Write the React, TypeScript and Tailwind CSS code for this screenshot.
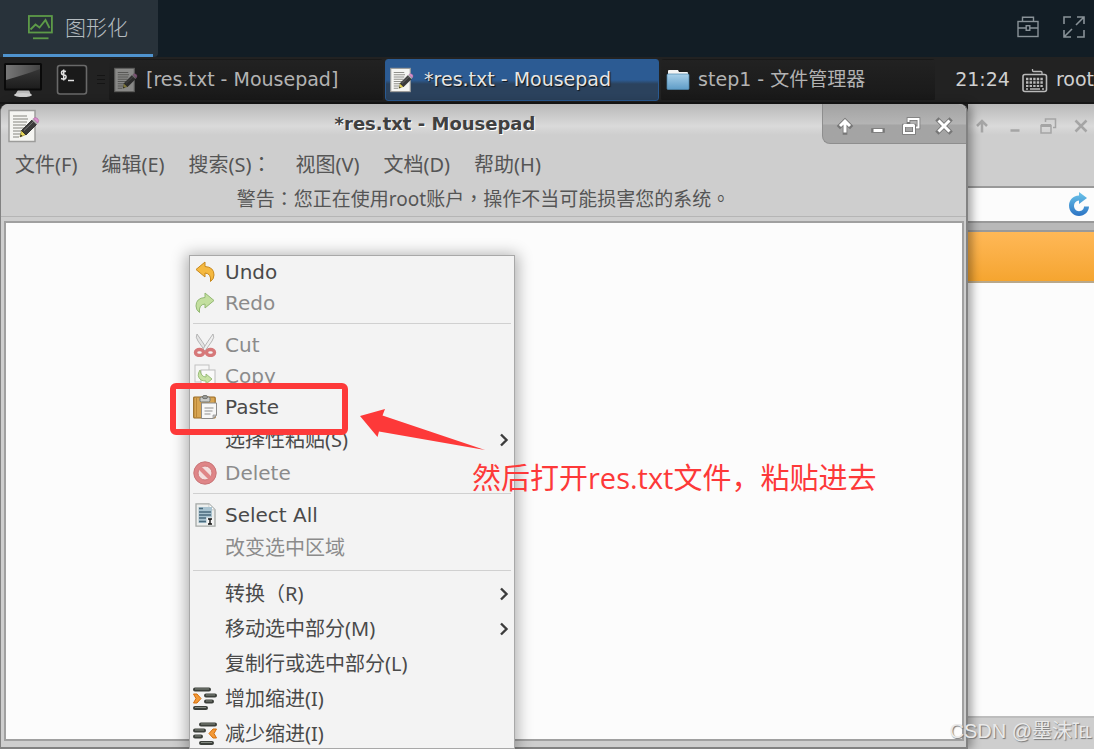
import type { ReactNode } from 'react'

const LATIN = "font-['DejaVu_Sans','Noto_Sans_CJK_SC',sans-serif]"
const CJK = "font-['Noto_Sans','Noto_Sans_CJK_SC',sans-serif]"
// the TC face centres its colon and comma
const CJK_CENTERED = "font-['Noto_Sans','Noto_Sans_CJK_TC',sans-serif]"

function ChartMonitorIcon() {
  return (
    <svg className="w-[25px] h-[25px]" viewBox="0 0 25 25" fill="none" stroke="#5d9a48" strokeWidth="1.8">
      <rect x="0.9" y="1" width="23" height="16.5" />
      <path d="M2.5 14.5 7.5 9.5l4 3L17.5 5l4 8" />
      <path d="M5 23.3h15.5" />
    </svg>
  )
}

function ToolboxIcon() {
  return (
    <svg className="w-[22px] h-[22px]" viewBox="0 0 22 22" fill="none" stroke="currentColor" strokeWidth="1.4">
      <rect x="1" y="5.5" width="20" height="15" />
      <path d="M5.5 5.5V1.2h11v4.3M1 12h8M13 12h8" />
      <rect x="9.2" y="9.7" width="3.6" height="4.6" />
    </svg>
  )
}

function ExpandIcon() {
  return (
    <svg className="w-[22px] h-[22px]" viewBox="0 0 22 22" fill="none" stroke="currentColor" strokeWidth="1.6">
      <path d="M1 8V1h7M14 1h7v7M21 1l-8 8M21 14v7h-7M8 21H1v-7M1 21l8-8" />
    </svg>
  )
}

function DesktopIcon() {
  return (
    <svg className="w-10 h-9" viewBox="0 0 40 36">
      <defs>
        <linearGradient id="screen" x1="0" y1="0" x2="0" y2="1">
          <stop offset="0" stopColor="#3c3c3c" />
          <stop offset="1" stopColor="#1d1d1d" />
        </linearGradient>
        <linearGradient id="glare" x1="0" y1="0" x2="1" y2="0">
          <stop offset="0" stopColor="#777" />
          <stop offset="1" stopColor="#444" />
        </linearGradient>
      </defs>
      <path d="M15 28h11l2 5q-7 2.5-16 0z" fill="#b9b9b9" />
      <ellipse cx="20" cy="33" rx="9" ry="2" fill="#cfcfcf" />
      <rect x="1" y="1" width="38" height="27.5" rx="1.5" fill="#0a0a0a" />
      <rect x="3" y="3" width="34" height="23.5" fill="url(#screen)" />
      <path d="M3 3h34v4Q24 12 3 18z" fill="url(#glare)" />
    </svg>
  )
}

function TerminalIcon() {
  return (
    <svg className="w-8 h-8" viewBox="0 0 32 32">
      <rect x="1.5" y="1.5" width="29" height="28.5" rx="2.5" fill="#1a1a1a" stroke="#696969" strokeWidth="1.6" />
      <g fill="none" stroke="#e2e2e2" strokeWidth="1.5">
        <path d="M10 7.5Q5.5 6 5.5 8.5T8 11t2 2.5T5 14.5M7.7 5.5v11" />
        <path d="M12 16.500h6" />
      </g>
    </svg>
  )
}

function NoteIcon({ className }: { className: string }) {
  return (
    <svg className={className} viewBox="0 0 32 34">
      <rect x="1" y="1.5" width="26" height="31" fill="#f5f5f2" stroke="#9c9c9a" strokeWidth="1.5" />
      <path d="M5 7h14M5 10h15M5 13h14M5 16h13M5 19h11M5 22h10M5 25h8M5 28h6" stroke="#85857f" strokeWidth="1.2" />
      <path d="M12 28l1.5-6.5 4.5 4z" fill="#e8d859" stroke="#8a7d25" strokeWidth=".6" />
      <path d="M12 28l.7-2.5 1.8 1.6z" fill="#222" />
      <path d="M13.5 21.5 24 11l4.5 4.5L18 26z" fill="#3a3a3a" stroke="#222" strokeWidth=".8" />
      <path d="M16 21.5 25.5 12.5" stroke="#777" strokeWidth="1" />
      <path d="M24 11l1.3-1.3 4.5 4.5-1.3 1.3z" fill="#b5b5b5" />
      <path d="M25.3 9.7q1.7-2 4-.5 2.500 2 .5 5z" fill="#dc8fce" stroke="#a8699c" strokeWidth=".6" />
    </svg>
  )
}

function FolderIcon() {
  return (
    <svg className="w-6 h-6" viewBox="0 0 24 24">
      <defs>
        <linearGradient id="folder" x1="0" y1="0" x2="0" y2="1">
          <stop offset="0" stopColor="#a9d0e9" />
          <stop offset="1" stopColor="#5e9cc7" />
        </linearGradient>
      </defs>
      <path d="M2 7V3q0-1 1-1h9l1 2h8q1 0 1 1v3z" fill="#f4f4f4" />
      <rect x="1" y="6" width="22" height="15.5" rx="1" fill="url(#folder)" stroke="#4f87ad" strokeWidth=".7" />
    </svg>
  )
}

function KeyboardIcon() {
  return (
    <svg className="w-[26px] h-[26px]" viewBox="0 0 26 26" fill="none" stroke="#b9b9b9">
      <rect x="1" y="7.5" width="23.5" height="17" rx="2" strokeWidth="1.6" />
      <path d="M10.5 2v1.5q0 1 1 1H19q1 0 1 1V7" strokeWidth="1.3" />
      <path d="M4 12h18M4 15.500h18" strokeWidth="2.3" strokeDasharray="2.4 1.2" />
      <path d="M4 19h18" strokeWidth="2" strokeDasharray="2.4 1.2" />
      <path d="M4 22h2M8 22h10M20 22h2" strokeWidth="1.3" />
    </svg>
  )
}

function WindowButtons({ active }: { active: boolean }) {
  const color = active ? '#fff' : '#a5a5a5'
  const glyphs = [
    { label: 'Roll up', d: 'M10 16.500V9M5 10l5-5 5 5M10 6v4', width: 3 },
    { label: 'Minimize', d: 'M5.500 14.500h9', width: 3 },
    { label: 'Restore', d: 'M3 9.500h10v7.500H3zM7.500 6V3h10v8.500H15', width: 2 },
    { label: 'Close', d: 'M4.500 4.500l11 11M15.500 4.500l-11 11', width: 3 },
  ]
  return (
    <>
      {glyphs.map((g) => (
        <button key={g.label} type="button" aria-label={g.label} className="shrink-0">
          <svg className="w-5 h-5" viewBox="0 0 20 20" fill="none">
            {active && <path d={g.d} stroke="#777" strokeWidth={g.width + 1.6} strokeLinecap="square" />}
            <path d={g.d} stroke={color} strokeWidth={g.width - (active ? 0 : 0.5)} />
            {g.label === 'Restore' && <path d="M3 9.500h10" stroke={color} strokeWidth="3" />}
          </svg>
        </button>
      ))}
    </>
  )
}

function RefreshIcon() {
  return (
    <svg className="w-6 h-6" viewBox="0 0 24 24">
      <defs>
        <linearGradient id="refresh" x1="0" y1="0" x2="0" y2="1">
          <stop offset="0" stopColor="#6cc5ea" />
          <stop offset="1" stopColor="#2c74c4" />
        </linearGradient>
      </defs>
      <path d="M12 0v3.5C5.5 4 2 8.5 2 13.5 2 19.5 6.500 24 12 24s10-4.500 10-9.500h-5c0 2.700-2 4.700-5 4.700s-5-2.400-5-5.400 2-5 5-5.300V12l8-6z" fill="url(#refresh)" />
    </svg>
  )
}

const UNDO_PATH = 'M2 9.500 11 2v4.500q9 .5 9 8.500 0 4-3.500 6.500 1-8-5.500-8.500V17z'

const icons: Record<string, ReactNode> = {
  undo: <path d={UNDO_PATH} transform="translate(1 0)" fill="#f5b940" stroke="#c8891c" strokeWidth="1" />,
  redo: <path d={UNDO_PATH} transform="matrix(-1 0 0 1 23 0)" fill="#c3df9f" stroke="#93b873" strokeWidth="1" />,
  cut: (
    <g>
      <path d="M4 1q-2 3 1 7l7 10 2-2Q9 8 4 1z" fill="#e4e4e4" stroke="#a7a7a7" strokeWidth=".8" />
      <path d="M20 1q2 3-1 7l-7 10-2-2Q15 8 20 1z" fill="#efefef" stroke="#a7a7a7" strokeWidth=".8" />
      <g fill="none" stroke="#d67879" strokeWidth="3.4">
        <ellipse cx="6.500" cy="19.500" rx="4" ry="3" />
        <ellipse cx="17.500" cy="19.500" rx="4" ry="3" />
      </g>
    </g>
  ),
  copy: (
    <g>
      <rect x="2" y="1" width="14" height="17" fill="#f6f6f6" stroke="#c2c2c2" />
      <rect x="8" y="6" width="14" height="17" fill="#fafafa" stroke="#bcbcbc" />
      <path d="M7 6q-4 6 1 10 2 1 5 1v3l6-5-6-5v3q-5 0-6-7z" fill="#c7e2a3" stroke="#93b873" strokeWidth=".9" />
    </g>
  ),
  paste: (
    <g>
      <rect x=".7" y="2" width="21.500" height="21" rx="1" fill="#d8a552" stroke="#9a6b23" strokeWidth="1.200" />
      <path d="M3.500 3v19" stroke="#bd8737" strokeWidth="1" />
      <rect x="7" y="2" width="10" height="5" rx="1.500" fill="#c9cbc8" stroke="#71736f" />
      <rect x="9.500" y=".6" width="5" height="3" rx="1.500" fill="#9c9e9a" stroke="#71736f" />
      <path d="M8.500 8h15v12l-3.500 3.500H8.500z" fill="#f7f7f7" stroke="#8c8c8c" />
      <path d="M11.500 13h9M11.500 16h8M11.500 19h6" stroke="#909090" strokeWidth="1.200" />
      <path d="M23.500 20H20v3.500z" fill="#c8c8c8" stroke="#8c8c8c" strokeWidth=".7" />
    </g>
  ),
  delete: (
    <g>
      <circle cx="12" cy="12" r="11.200" fill="#df8587" stroke="#c87577" />
      <circle cx="12" cy="12" r="7" fill="#f3dede" stroke="#cf7779" strokeWidth="1" />
      <path d="M7 7l10 10" stroke="#df8587" strokeWidth="4" />
    </g>
  ),
  select: (
    <g>
      <path d="M3 .8h13l6 6v16.400H3z" fill="#eceeed" stroke="#a5a9a7" strokeWidth="1.300" />
      <path d="M16 .8v6h6z" fill="#fff" stroke="#b9bdbb" strokeWidth=".8" />
      <rect x="5.500" y="4" width="13.500" height="16" fill="#a9c3d0" />
      <path d="M6 5.500h4M6 9h12M6 12h12M6 15h7M6 18.500h7" stroke="#496a7c" strokeWidth="1.500" />
      <rect x="13.500" y="14.500" width="7" height="7" fill="#f4f4f4" />
      <path d="M15 16h4M17 16v5M15 21h4" stroke="#111" strokeWidth="1.400" />
    </g>
  ),
  indent: (
    <g>
      <g stroke="#3c403b" strokeWidth="4" strokeLinecap="round">
        <path d="M2 2.500h14M13 8.500h9M13 14.500h6M2 21h11" />
      </g>
      <path d="M2 2h14M13 8h9M13 14h6M2 20.500h11" stroke="#848a82" strokeWidth="1" />
      <path d="M.5 7h3.500l4 4.500L4 16H.5l2.500-4.500z" fill="#f39a38" stroke="#d36e0c" />
    </g>
  ),
  unindent: (
    <g>
      <g stroke="#3c403b" strokeWidth="4" strokeLinecap="round">
        <path d="M8 2.500h14M2 8.500h9M2 14.500h6M8 21h11" />
      </g>
      <path d="M8 2h14M2 8h9M2 14h6M8 20.500h11" stroke="#848a82" strokeWidth="1" />
      <path d="M23.500 7H20l-4 4.500 4 4.500h3.500L21 11.500z" fill="#f39a38" stroke="#d36e0c" />
    </g>
  ),
}

type Item = { label: string; icon?: string; disabled?: boolean; sub?: boolean; cjk?: boolean }

const groups: Item[][] = [
  [
    { label: 'Undo', icon: 'undo' },
    { label: 'Redo', icon: 'redo', disabled: true },
  ],
  [
    { label: 'Cut', icon: 'cut', disabled: true },
    { label: 'Copy', icon: 'copy', disabled: true },
    { label: 'Paste', icon: 'paste' },
    { label: '选择性粘贴(S)', sub: true, cjk: true },
    { label: 'Delete', icon: 'delete', disabled: true },
  ],
  [
    { label: 'Select All', icon: 'select' },
    { label: '改变选中区域', disabled: true, cjk: true },
  ],
  [
    { label: '转换（R)', sub: true, cjk: true },
    { label: '移动选中部分(M)', sub: true, cjk: true },
    { label: '复制行或选中部分(L)', cjk: true },
    { label: '增加缩进(I)', icon: 'indent', cjk: true },
    { label: '减少缩进(I)', icon: 'unindent', cjk: true },
  ],
]

function ContextMenu() {
  return (
    <div
      role="menu"
      className="absolute left-[189px] top-[151px] bottom-0 w-[326px] overflow-hidden bg-[#f3f3f3] border border-[#a8a8a8] shadow-[0_2px_14px_3px_rgba(0,0,0,0.3)]"
    >
      {groups.map((items, i) => (
        <div key={i}>
          {i > 0 && <hr className="mx-[3px] my-[5px] border-[#d0d0d0]" />}
          {items.map((item) => (
            <button
              key={item.label}
              type="button"
              role="menuitem"
              disabled={item.disabled}
              className={`w-full flex items-center gap-2 pl-[3px] pr-1 text-xl text-left whitespace-nowrap ${
                item.cjk ? `h-[35px] ${CJK}` : `h-[31px] ${LATIN}`
              } ${item.disabled ? 'text-[#8b8b8b]' : 'text-[#4a4a4a]'}`}
            >
              <svg className="w-6 h-6 shrink-0" viewBox="0 0 24 24" fill="none">
                {item.icon && icons[item.icon]}
              </svg>
              <span className="flex-1">{item.label}</span>
              {item.sub && (
                <svg className="w-3 h-4" viewBox="0 0 12 16" fill="none">
                  <path d="M3 2.500 8.500 8 3 13.500" stroke="#3c3c3c" strokeWidth="2.400" />
                </svg>
              )}
            </button>
          ))}
        </div>
      ))}
    </div>
  )
}

function Header() {
  return (
    <header className="h-[57px] shrink-0 flex items-stretch justify-between bg-[#121d25]">
      <button
        type="button"
        className="w-[158px] pl-[3px] pr-[5px] rounded-br bg-[#28323a] text-[21px] text-[#b5bcc0] font-light font-['Noto_Sans_CJK_SC',sans-serif]"
      >
        <span className="h-full flex items-center gap-3 px-[25px] border-b-3 border-[#4f93ce] whitespace-nowrap">
          <ChartMonitorIcon />
          图形化
        </span>
      </button>
      <div className="flex items-center gap-6 pr-[9px] pb-1 text-[#899298]">
        <button type="button" aria-label="Toolbox"><ToolboxIcon /></button>
        <button type="button" aria-label="Fullscreen"><ExpandIcon /></button>
      </div>
    </header>
  )
}

function Taskbar() {
  const task = 'flex-1 min-w-0 h-[42px] flex items-center px-1 border rounded-[3px] whitespace-nowrap text-left'
  const idle = 'gap-2 border-transparent bg-linear-to-b from-[#222] to-[#191919]'
  return (
    <nav className={`h-[47px] shrink-0 flex items-center overflow-hidden bg-[#222] border-b-2 border-[#161616] text-[19px] text-[#b3b3b3] ${LATIN}`}>
      <button type="button" aria-label="Show desktop" className="shrink-0 ml-[3px]"><DesktopIcon /></button>
      <button type="button" aria-label="Terminal" className="shrink-0 ml-[13px]"><TerminalIcon /></button>
      <div className="shrink-0 w-[21px] flex flex-col items-end gap-[3px] pr-1">
        <i className="w-2 h-px bg-[#151515]" />
        <i className="w-2 h-px bg-[#151515]" />
        <i className="w-2 h-px bg-[#151515]" />
      </div>
      <div className="flex-1 flex gap-[2px] min-w-0">
        <button type="button" className={`${task} ${idle}`}>
          <NoteIcon className="w-6 h-[26px] opacity-50" />
          [res.txt - Mousepad]
        </button>
        <button
          type="button"
          className={`${task} gap-[10px] text-[#e6e6e6] border-[#2a5b93] bg-linear-to-b from-[#2c5b93] from-50% to-[#2b425d] to-60% [text-shadow:1px_1px_1px_#111]`}
        >
          <NoteIcon className="w-6 h-[26px]" />
          *res.txt - Mousepad
        </button>
        <button type="button" className={`${task} ${idle}`}>
          <FolderIcon />
          step1 - 文件管理器
        </button>
      </div>
      <time className="shrink-0 ml-5 text-[#d0d0d0]">21:24</time>
      <button type="button" aria-label="Keyboard" className="shrink-0 ml-3"><KeyboardIcon /></button>
      <span className="shrink-0 ml-2 text-[#d0d0d0]">root</span>
    </nav>
  )
}

const TITLE_BG = 'bg-linear-to-b from-[#b9b9b9] via-[#dadada] via-50% to-[#cecece] to-70%'

function MousepadWindow() {
  return (
    <section className="relative z-10 flex-1 min-w-0 flex flex-col rounded-t-lg bg-[#cecece] border-l border-r-2 border-b-2 border-[#828282] shadow-[4px_0_10px_rgba(0,0,0,0.35)]">
      <div className={`h-11 shrink-0 flex items-start rounded-t-lg pl-[7px] ${TITLE_BG}`}>
        <NoteIcon className="w-8 h-[34px] mt-[5px]" />
        <h1 className="flex-1 mt-2 pl-2 text-center text-lg leading-6 font-bold text-[#404040] [text-shadow:1px_1px_0_#fff] font-['DejaVu_Sans',sans-serif]">
          *res.txt - Mousepad
        </h1>
        <div className="h-10 flex items-center gap-[13px] px-[12px] pt-1 rounded-bl-lg rounded-tr-lg border-b border-l border-[#8e8e8e] bg-linear-to-b from-[#a2a2a2] via-[#b4b4b4] via-50% to-[#a4a4a4] to-55%">
          <WindowButtons active />
        </div>
      </div>
      <div className={`h-[34px] shrink-0 flex items-center gap-6 pl-[14px] text-xl text-[#555] whitespace-nowrap ${CJK_CENTERED}`}>
        {['文件(F)', '编辑(E)', '搜索(S)：', '视图(V)', '文档(D)', '帮助(H)'].map((m) => (
          <button key={m} type="button">{m}</button>
        ))}
      </div>
      <p className={`h-[35px] shrink-0 text-center text-[19px] leading-[34px] text-[#555] whitespace-nowrap border-b border-[#b5b5b5] ${CJK_CENTERED}`}>
        警告：您正在使用root账户，操作不当可能损害您的系统。
      </p>
      <textarea
        aria-label="res.txt"
        className="flex-1 min-h-0 block mt-1 mb-[6px] ml-[3px] mr-[2px] bg-[#fcfcfc] border-2 border-[#a0a0a0] resize-none outline-none"
      />
    </section>
  )
}

function FileManagerWindow() {
  return (
    <section className="w-[126px] shrink-0 flex flex-col bg-[#cecece]">
      <div className={`h-11 shrink-0 flex items-center gap-[13px] pl-1 ${TITLE_BG}`}>
        <WindowButtons active={false} />
      </div>
      <div className="mt-[38px] h-[37px] shrink-0 flex items-center justify-end pr-[3px] pb-[2px] bg-[#fcfcfc] border-y-2 border-[#999]">
        <button type="button" aria-label="Reload"><RefreshIcon /></button>
      </div>
      <div className="h-[9px] shrink-0 bg-[#b8b8b8] border-b-2 border-[#999]" />
      <div className="h-[51px] shrink-0 bg-linear-to-b from-[#ffb856] to-[#f5a52f] border-b-2 border-[#b9a88a]" />
      <div className="flex-1 bg-[#fcfcfc]" />
      <div className="h-[33px] shrink-0 border-t-2 border-[#bdbdbd]" />
    </section>
  )
}

export default function App() {
  return (
    <div className="h-screen flex flex-col overflow-hidden bg-[#222]">
      <Header />
      <Taskbar />
      <main className="relative flex-1 min-h-0 flex">
        <MousepadWindow />
        <FileManagerWindow />
        <div className="absolute inset-0 z-20 overflow-hidden pointer-events-none">
          <ContextMenu />
          <div className="absolute left-[170px] top-[279px] w-[178px] h-[52px] border-6 border-[#fd3939] rounded-md" />
          <svg className="absolute left-[360px] top-[303px] w-[126px] h-[44px]" viewBox="0 0 126 44" fill="#fd3939">
            <path d="M0 9 25 2l-2.500 6.500L125 43 19 24.500 17.500 30z" />
          </svg>
          <p className="absolute left-[472px] top-[354px] text-[29px] leading-10 text-[#fd3939] whitespace-nowrap font-['Open_Sans','Noto_Sans_CJK_SC',sans-serif]">
            然后打开res.txt文件，粘贴进去
          </p>
          <p className="absolute right-[2px] bottom-1 text-[20px] leading-7 text-[#e9e9e9] whitespace-nowrap [text-shadow:1px_1px_1px_#777] font-['Liberation_Sans','Noto_Sans_CJK_SC',sans-serif]">
            CSDN @墨沫℡
          </p>
        </div>
      </main>
    </div>
  )
}
